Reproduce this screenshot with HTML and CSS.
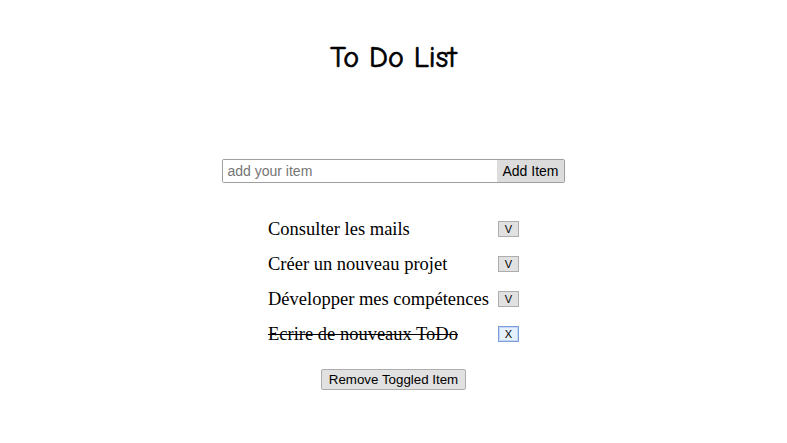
FILE: index.html
```html
<!DOCTYPE html>
<html lang="fr">
<head>
<meta charset="utf-8">
<title>To Do List</title>
<link rel="stylesheet" href="styles.css">
</head>
<body>
<main class="app">
  <h1 class="title">To Do List</h1>
  <form class="add-form">
    <input class="add-input" type="text" placeholder="add your item">
    <button class="add-btn" type="button">Add Item</button>
  </form>
  <ul class="list">
    <li class="item"><span class="item-text">Consulter les mails</span><button class="toggle" type="button">V</button></li>
    <li class="item"><span class="item-text">Créer un nouveau projet</span><button class="toggle" type="button">V</button></li>
    <li class="item"><span class="item-text">Développer mes compétences</span><button class="toggle" type="button">V</button></li>
    <li class="item done"><span class="item-text">Ecrire de nouveaux ToDo</span><button class="toggle focused" type="button">X</button></li>
  </ul>
  <div class="actions">
    <button class="remove-btn" type="button">Remove Toggled Item</button>
  </div>
</main>
</body>
</html>
```

FILE: styles.css
```css
html, body {
  margin: 0;
  padding: 0;
  background: #ffffff;
}
body {
  font-family: "Liberation Serif", "Times New Roman", serif;
  color: #000;
}
.app {
  display: flex;
  flex-direction: column;
  align-items: center;
}
.title {
  font-family: "Comic Sans MS", "Comic Neue", "Lato", sans-serif;
  font-weight: normal;
  -webkit-text-stroke: 0.7px #000;
  font-size: 30px;
  line-height: 32px;
  margin: 42px 0 0 0;
}
.add-form {
  display: flex;
  margin-top: 85px;
  border: 1px solid #a0a0a0;
  border-radius: 2px;
  box-shadow: 0 0 1px rgba(0,0,0,0.15);
}
.add-input {
  width: 266px;
  height: 22px;
  border: none;
  padding: 0 4px;
  font-family: "Liberation Sans", Arial, sans-serif;
  font-size: 14px;
  outline: none;
}
.add-input::placeholder {
  color: #757575;
}
.add-btn {
  height: 22px;
  border: none;
  background: #dcdcdc;
  padding: 0 5px;
  font-family: "Liberation Sans", Arial, sans-serif;
  font-size: 14px;
  color: #000;
}
.list {
  list-style: none;
  margin: 35px 0 0 0;
  padding: 0;
  width: 251px;
  display: flex;
  flex-direction: column;
  gap: 13px;
}
.item {
  display: flex;
  justify-content: space-between;
  align-items: center;
  height: 22px;
  font-size: 18.5px;
}
.item.done .item-text {
  text-decoration: line-through;
}
.toggle {
  width: 21px;
  height: 16px;
  padding: 0;
  border: 1px solid #adadad;
  background: #e1e1e1;
  font-family: "Liberation Sans", Arial, sans-serif;
  font-size: 11px;
  line-height: 14px;
  color: #000;
}
.toggle.focused {
  border-color: #7a9fdc;
  box-shadow: inset 0 0 0 1px #c5d7f5;
  background: #e5f1fb;
}
.actions {
  margin-top: 24px;
}
.remove-btn {
  height: 21px;
  padding: 0 7px;
  border: 1px solid #adadad;
  border-radius: 2px;
  background: #e1e1e1;
  font-family: "Liberation Sans", Arial, sans-serif;
  font-size: 13.33px;
  color: #000;
}
```
